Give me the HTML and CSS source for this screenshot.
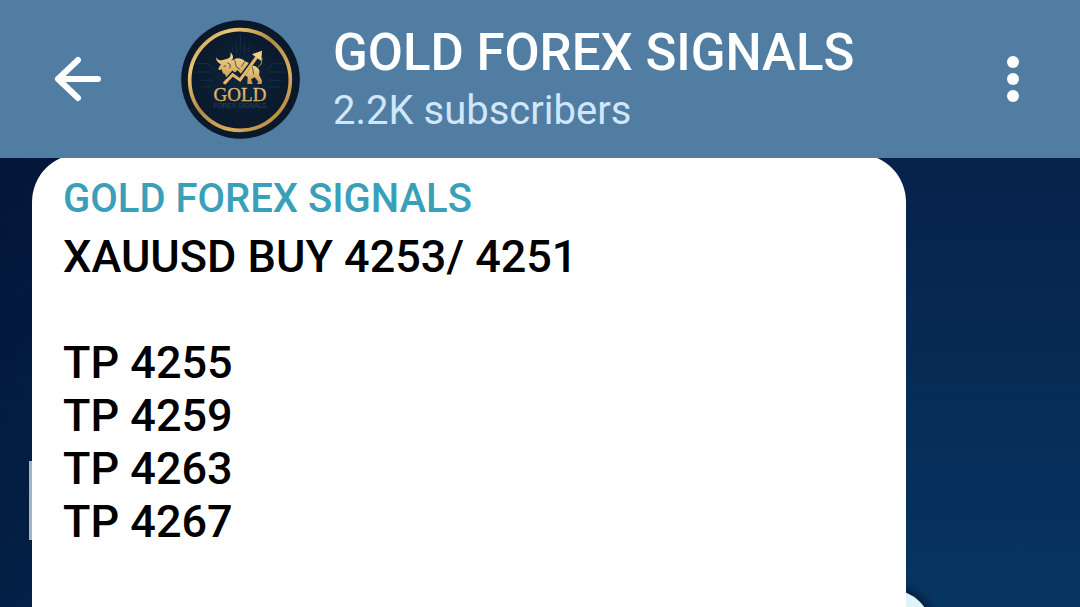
FILE: index.html
```html
<!DOCTYPE html>
<html lang="en">
<head>
    <meta charset="UTF-8">
    <meta name="viewport" content="width=device-width, initial-scale=1.0">
    <title>GOLD FOREX SIGNALS</title>
    <link rel="stylesheet" href="styles.css">
</head>
<body>

<header class="header">
    <button class="icon-button" type="button" aria-label="Back">
        <svg width="48" height="48" viewBox="0 0 48 48" fill="none" stroke="#fff" stroke-width="6" stroke-linecap="round" stroke-linejoin="round">
            <path d="M44 23H4M24 4L4 23L24 42"/>
        </svg>
    </button>

    <svg class="avatar" viewBox="34 29 357 357" role="img" aria-label="Channel logo">
        <defs>
            <radialGradient id="disc">
                <stop offset="0" stop-color="#10263c"/>
                <stop offset="0.6" stop-color="#0b1c30"/>
                <stop offset="1" stop-color="#0a1829"/>
            </radialGradient>
            <linearGradient id="ring" x1="0" y1="0" x2="1" y2="1">
                <stop offset="0" stop-color="#a97c36"/>
                <stop offset="0.2" stop-color="#e9c878"/>
                <stop offset="0.45" stop-color="#b58a43"/>
                <stop offset="0.7" stop-color="#d9ae5d"/>
                <stop offset="1" stop-color="#a5762f"/>
            </linearGradient>
            <linearGradient id="gold" x1="0" y1="0" x2="0" y2="1">
                <stop offset="0" stop-color="#f3d795"/>
                <stop offset="1" stop-color="#c89446"/>
            </linearGradient>
        </defs>
        <circle cx="212.500" cy="207.500" r="178" fill="url(#disc)"/>
        <!-- circuit traces -->
        <g fill="none" stroke="#1b3850" stroke-width="2">
            <path d="M212 70V120M200 95V130M224 95V130M188 110V125M236 110V125"/>
            <path d="M85 160H115L135 180M80 185H125M90 210H130M340 160H310L290 180M345 185H295M335 210H295M95 230H125M330 230H300"/>
        </g>
        <circle cx="211" cy="209" r="151" fill="none" stroke="url(#ring)" stroke-width="11"/>
        <!-- bull -->
        <g fill="url(#gold)">
            <path d="M139 141C143 149 150 150 157 150L170 146C180 145 185 139 182 126C193 136 192 147 184 151L192 148C204 140 217 145 226 153L238 158L214 190L203 179L181 203L172 219H159L171 204L166 192L160 189L156 177C151 181 144 180 147 172L154 162C146 159 139 152 139 141Z"/>
            <path d="M242 164L257 168C270 174 271 184 268 193L277 211L276 221H262L266 214L255 201L244 207L249 221H233L234 200L222 193Z"/>
        </g>
        <g fill="none" stroke="#0d2034" stroke-width="2">
            <path d="M173 157L182 163L180 174M195 149L200 169L212 178M225 154L215 169M248 169L252 192M162 168L169 167"/>
        </g>
        <path d="M266 168C279 164 273 153 278 143" fill="none" stroke="#c99a4c" stroke-width="3"/>
        <path d="M172 208L189 189L211 205L259 140" fill="none" stroke="#0d2034" stroke-width="13"/>
        <path d="M163 220L189 193L211 209L263 138" fill="none" stroke="#e3b768" stroke-width="9"/>
        <path d="M247 132L277 121L275 152Z" fill="#efd08a"/>
        <text class="logo-name" x="211" y="271" text-anchor="middle" fill="url(#gold)">GOLD</text>
        <text class="logo-sub" x="211" y="292" text-anchor="middle" fill="#2a4258">FOREX SIGNALS</text>
    </svg>

    <div class="channel">
        <h1 class="channel-title">GOLD FOREX SIGNALS</h1>
        <div class="channel-status">2.2K subscribers</div>
    </div>

    <button class="icon-button" type="button" aria-label="More options">
        <svg width="26" height="48" viewBox="0 0 26 48" fill="#fff">
            <circle cx="13" cy="6" r="6"/>
            <circle cx="13" cy="23" r="6"/>
            <circle cx="13" cy="40" r="6"/>
        </svg>
    </button>
</header>

<main class="chat">
    <article class="message">
        <div class="message-author">GOLD FOREX SIGNALS</div>
        <p class="message-text">XAUUSD BUY 4253/ 4251

TP 4255
TP 4259
TP 4263
TP 4267</p>
    </article>
</main>

</body>
</html>
```

FILE: styles.css
```css
* { box-sizing: border-box; }
body {
    display: flex;
    flex-direction: column;
    min-height: 100vh;
    margin: 0;
    font-family: Roboto, sans-serif;
}
.header {
    display: flex;
    align-items: center;
    padding: 20px 54px 19px;
    background-color: #517da2;
    color: white;
}
.icon-button {
    display: flex;
    padding: 0;
    border: none;
    background: none;
    cursor: pointer;
}
.avatar {
    flex: none;
    width: 119px;
    height: 119px;
    margin: 0 33px 0 79px;
}
.logo-name {
    font-family: "Liberation Serif", serif;
    font-size: 57px;
    stroke: #d9ae62;
    stroke-width: 1px;
}
.logo-sub {
    font-family: "Liberation Sans", sans-serif;
    font-size: 20px;
}
.channel {
    flex: 1;
    padding-top: 2px;
}
.channel-title {
    margin: 0;
    font-size: 51px;
    font-weight: 500;
    line-height: 60px;
}
.channel-status {
    color: #d0e7fb;
    font-size: 40px;
    line-height: 56px;
}
.chat {
    position: relative;
    flex: 1;
    display: flex;
    overflow: hidden;
    padding: 0 174px 0 32px;
    background: linear-gradient(to right, rgba(0, 10, 40, 0.5) 0, rgba(0, 10, 40, 0) 50%), linear-gradient(#06224a, #073562);
}
/* light patches of the wallpaper that show past the message */
.chat::before,
.chat::after {
    content: "";
    position: absolute;
    background-color: #a3b5c3;
}
.chat::before {
    left: 29px;
    top: 303px;
    width: 20px;
    height: 79px;
}
.chat::after {
    right: 149px;
    bottom: -61px;
    width: 78px;
    height: 78px;
    border-radius: 50%;
    background-color: #e0f3f8;
    box-shadow: 0 0 8px 4px #04203c;
}
.message {
    position: relative;
    z-index: 1;
    flex: 1;
    margin-top: -4px;
    padding: 19px 31px;
    border-radius: 48px 48px 0 0;
    background-color: white;
}
.message-author {
    color: #3a9fb9;
    font-size: 40px;
    font-weight: 500;
    line-height: 52px;
}
.message-text {
    margin: 5px 0 0;
    color: black;
    font-size: 45px;
    font-weight: 500;
    line-height: 53px;
    white-space: pre-line;
}
```
